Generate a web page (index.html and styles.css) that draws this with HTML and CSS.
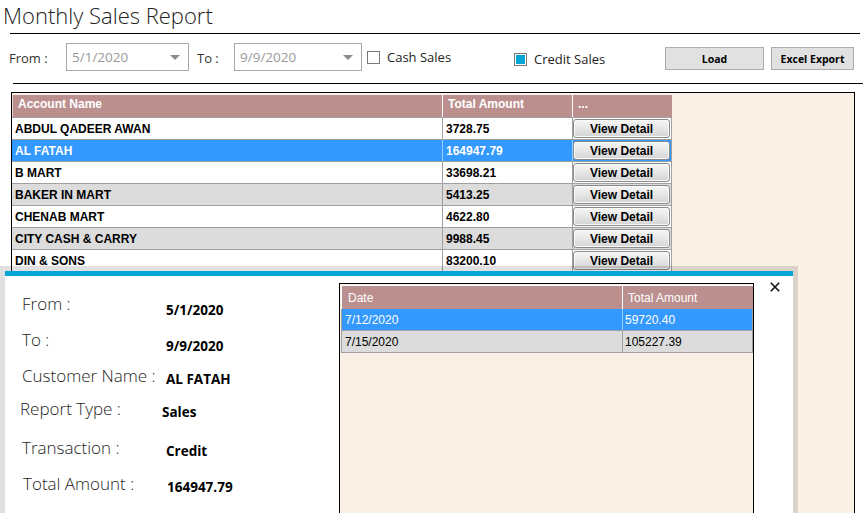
FILE: index.html
```html
<!DOCTYPE html>
<html>
<head>
<meta charset="utf-8">
<title>Monthly Sales Report</title>
<link rel="stylesheet" href="styles.css">
</head>
<body>
<div class="page">
  <h1 class="title">Monthly Sales Report</h1>
  <div class="rule rule-top"></div>
  <div class="toolbar">
    <span class="lbl lbl-from">From :</span>
    <div class="combo combo-from"><span>5/1/2020</span><i class="caret"></i></div>
    <span class="lbl lbl-to">To :</span>
    <div class="combo combo-to"><span>9/9/2020</span><i class="caret"></i></div>
    <label class="check check-cash"><span class="box"></span>Cash Sales</label>
    <label class="check check-credit"><span class="box checked"><span class="fill"></span></span>Credit Sales</label>
    <button class="btn btn-load">Load</button>
    <button class="btn btn-excel">Excel Export</button>
  </div>
  <div class="rule rule-bottom"></div>

  <div class="frame">
    <div class="grid">
      <div class="ghead">
        <div class="c1">Account Name</div>
        <div class="c2">Total Amount</div>
        <div class="c3">...</div>
      </div>
      <div class="grow"><div class="c1">ABDUL QADEER AWAN</div><div class="c2">3728.75</div><div class="c3"><span class="vbtn">View Detail</span></div></div>
      <div class="grow sel"><div class="c1">AL FATAH</div><div class="c2">164947.79</div><div class="c3"><span class="vbtn">View Detail</span></div></div>
      <div class="grow"><div class="c1">B MART</div><div class="c2">33698.21</div><div class="c3"><span class="vbtn">View Detail</span></div></div>
      <div class="grow alt"><div class="c1">BAKER IN MART</div><div class="c2">5413.25</div><div class="c3"><span class="vbtn">View Detail</span></div></div>
      <div class="grow"><div class="c1">CHENAB MART</div><div class="c2">4622.80</div><div class="c3"><span class="vbtn">View Detail</span></div></div>
      <div class="grow alt"><div class="c1">CITY CASH &amp; CARRY</div><div class="c2">9988.45</div><div class="c3"><span class="vbtn">View Detail</span></div></div>
      <div class="grow"><div class="c1">DIN &amp; SONS</div><div class="c2">83200.10</div><div class="c3"><span class="vbtn">View Detail</span></div></div>
    </div>
  </div>

  <div class="popup">
    <div class="accent"></div>
    <div class="pbody">
      <div class="info">
        <div class="irow"><span class="plabel">From :</span><span class="pval low">5/1/2020</span></div>
        <div class="irow"><span class="plabel">To :</span><span class="pval low">9/9/2020</span></div>
        <div class="irow"><span class="plabel">Customer Name :</span><span class="pval">AL FATAH</span></div>
        <div class="irow row-report"><span class="plabel">Report Type :</span><span class="pval">Sales</span></div>
        <div class="irow row-trans"><span class="plabel">Transaction :</span><span class="pval">Credit</span></div>
        <div class="irow row-total"><span class="plabel">Total Amount :</span><span class="pval">164947.79</span></div>
      </div>
      <div class="dframe">
        <div class="dhead"><div class="d1">Date</div><div class="d2">Total Amount</div></div>
        <div class="drow sel"><div class="d1">7/12/2020</div><div class="d2">59720.40</div></div>
        <div class="drow alt"><div class="d1">7/15/2020</div><div class="d2">105227.39</div></div>
      </div>
      <div class="close" aria-label="Close">
        <svg width="10" height="10" viewBox="0 0 10 10"><path d="M0.8 0.8 L9.2 9.2 M9.2 0.8 L0.8 9.2" stroke="#111" stroke-width="1.6" fill="none"/></svg>
      </div>
    </div>
  </div>
</div>
</body>
</html>
```

FILE: styles.css
```css
* { box-sizing: border-box; }
html, body { margin: 0; padding: 0; background: #fff; }
body {
  width: 865px;
  height: 513px;
  overflow: hidden;
  font-family: "Open Sans", "Liberation Sans", sans-serif;
  color: #000;
}
.page {
  position: relative;
  width: 865px;
  height: 513px;
  overflow: hidden;
}
.title {
  margin: 0;
  height: 33px;
  padding-left: 3px;
  font-weight: 300;
  font-size: 22px;
  line-height: 30px;
  color: #222;
  white-space: nowrap;
}
.rule { height: 1px; background: #000; }
.rule-top { margin-left: 10px; width: 850px; }
.rule-bottom { margin-left: 13px; width: 850px; }

.toolbar {
  display: flex;
  align-items: center;
  height: 49px;
  padding-left: 9px;
  font-size: 13px;
  color: #333;
}
.lbl { white-space: nowrap; margin-bottom: 1px; }
.lbl-from { width: 57px; }
.lbl-to { width: 37px; margin-left: 8px; }
.combo {
  display: flex;
  align-items: center;
  justify-content: space-between;
  height: 28px;
  margin-bottom: 3px;
  padding: 0 8px 0 5px;
  border: 1px solid #a9a9a9;
  background: #fff;
  color: #9a9a9a;
  font-size: 13.5px;
}
.combo-from { width: 123px; }
.combo-to { width: 128px; }
.caret {
  width: 0;
  height: 0;
  border-left: 5px solid transparent;
  border-right: 5px solid transparent;
  border-top: 5px solid #8c8c8c;
}
.check {
  display: flex;
  align-items: center;
  white-space: nowrap;
  font-size: 13px;
  color: #222;
}
.check-cash { width: 147px; margin-left: 5px; margin-bottom: 3px; }
.check-credit { width: 151px; margin-top: 1px; }
.box {
  display: flex;
  align-items: center;
  justify-content: center;
  width: 13px;
  height: 13px;
  margin-right: 7px;
  border: 1px solid #7a7a7a;
  background: #fff;
}
.box .fill {
  width: 9px;
  height: 9px;
  background: #06a7d7;
}
.btn {
  height: 23px;
  padding: 0;
  margin: 0;
  border: 1px solid #adadad;
  background: #e1e1e1;
  font-family: "Open Sans", "Liberation Sans", sans-serif;
  font-weight: 700;
  font-size: 10.5px;
  color: #000;
}
.btn-load { width: 99px; }
.btn-excel { width: 83px; margin-left: 7px; }

.frame {
  margin-top: 8px;
  margin-left: 11px;
  width: 844px;
  height: 440px;
  border: 1px solid #000;
  background: #faf0e6;
  padding-top: 2px;
}
.grid {
  width: 660px;
  font-family: "Liberation Sans", Arial, sans-serif;
  font-size: 12px;
  font-weight: 700;
}
.ghead, .grow { display: flex; }
.ghead {
  height: 22px;
  background: #bc8f8f;
  color: #fff;
  border-left: 1px solid #e8d6d6;
}
.ghead > div { padding: 2px 0 0 5px; line-height: 14px; border-right: 1px solid #fff; }
.ghead .c1 { width: 430px; }
.ghead .c2 { width: 130px; }
.ghead .c3 { width: 99px; border-right-color: #bc8f8f; }
.grow {
  height: 22px;
  border-top: 1px solid #a0a0a0;
  background: #fff;
}
.grow.alt { background: #dcdcdc; }
.grow.sel { background: #3399ff; color: #fff; }
.grow > div {
  display: flex;
  align-items: center;
  border-right: 1px solid #a0a0a0;
  white-space: nowrap;
}
.grow .c1 { width: 431px; padding-left: 3px; }
.grow .c2 { width: 130px; padding-left: 3px; }
.grow .c3 { width: 99px; padding: 1px 1px 1px 0; align-items: flex-start; }
.grow.sel .c1, .grow.sel .c2 { border-right-color: #9ccbff; }
.vbtn {
  display: flex;
  align-items: center;
  justify-content: center;
  width: 97px;
  height: 19px;
  border: 1px solid #8a8a8a;
  border-radius: 3px;
  background: linear-gradient(#f6f6f6, #e6e6e6 50%, #d4d4d4);
  box-shadow: inset 0 0 0 1px #fafafa;
  color: #000;
}

.popup {
  position: absolute;
  left: 0;
  top: 266px;
  width: 798px;
  height: 260px;
  border: 5px solid rgba(0, 0, 0, 0.12);
  border-bottom: 0;
  background: #fff;
  background-clip: padding-box;
}
.accent { height: 5px; background: #06a7d7; }
.pbody {
  position: relative;
  display: flex;
  height: 250px;
}
.info {
  width: 334px;
  padding: 10px 0 0 17px;
}
.irow {
  display: flex;
  align-items: center;
  height: 36px;
}
.plabel {
  width: 144px;
  font-weight: 300;
  font-size: 17px;
  line-height: 22px;
  color: #1e1e1e;
  white-space: nowrap;
}
.pval {
  margin-top: 6px;
  font-weight: 700;
  font-size: 13.5px;
  line-height: 18px;
  color: #000;
  white-space: nowrap;
}
.pval.low { margin-top: 12px; }
.row-report { margin-top: -3px; margin-left: -2px; }
.row-report .plabel { width: 142px; }
.row-trans { margin-top: 3px; }
.row-total { margin-left: 1px; }

.dframe {
  margin-top: 7px;
  width: 415px;
  height: 240px;
  border: 1px solid #000;
  background: #faf0e6;
  padding: 1px;
  font-family: "Liberation Sans", Arial, sans-serif;
  font-size: 12px;
}
.dhead, .drow { display: flex; width: 412px; }
.dhead {
  height: 24px;
  background: #bc8f8f;
  color: #fff;
  border-top: 1px solid #fff;
  border-left: 1px solid #fff;
}
.dhead > div { display: flex; align-items: center; }
.dhead .d1 { width: 281px; padding-left: 6px; border-right: 1px solid #fff; }
.dhead .d2 { width: 130px; padding-left: 5px; }
.drow {
  height: 22px;
  border-left: 1px solid #a0a0a0;
  border-bottom: 1px solid #a0a0a0;
  background: #fff;
}
.drow.sel { background: #3399ff; color: #fff; }
.drow.alt { background: #dcdcdc; color: #000; }
.drow > div { display: flex; align-items: center; border-right: 1px solid #a0a0a0; }
.drow .d1 { width: 281px; padding-left: 3px; }
.drow .d2 { width: 130px; padding-left: 2px; }
.drow.sel .d1 { border-right-color: #9ccbff; }

.close {
  position: absolute;
  left: 765px;
  top: 6px;
  width: 10px;
  height: 10px;
}
.close svg { display: block; }
```
